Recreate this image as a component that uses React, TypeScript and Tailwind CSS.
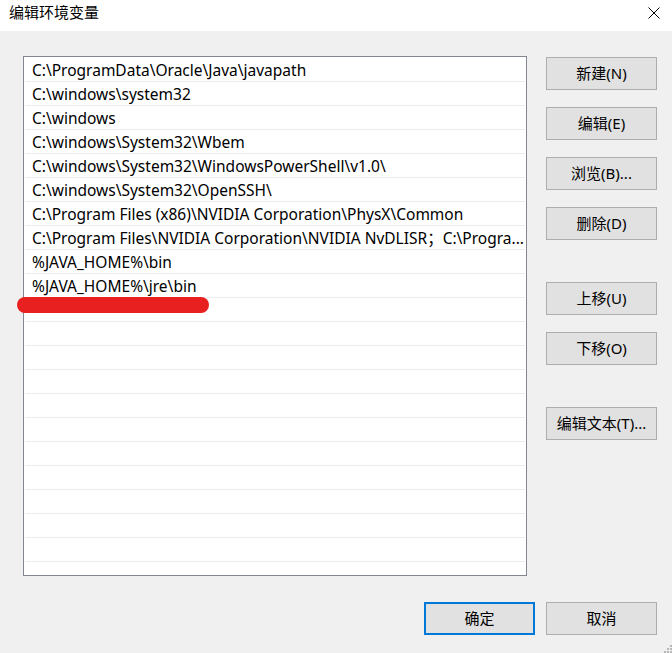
import React from "react";

const paths = [
  "C:\\ProgramData\\Oracle\\Java\\javapath",
  "C:\\windows\\system32",
  "C:\\windows",
  "C:\\windows\\System32\\Wbem",
  "C:\\windows\\System32\\WindowsPowerShell\\v1.0\\",
  "C:\\windows\\System32\\OpenSSH\\",
  "C:\\Program Files (x86)\\NVIDIA Corporation\\PhysX\\Common",
  "C:\\Program Files\\NVIDIA Corporation\\NVIDIA NvDLISR；C:\\Progra...",
  "%JAVA_HOME%\\bin",
  "%JAVA_HOME%\\jre\\bin",
];

const rows = [...paths, ...Array(12).fill("")];

const font = { fontFamily: '"Noto Sans", "Noto Sans CJK SC", sans-serif' };

function Btn({ label, className = "", primary = false }: { label: string; className?: string; primary?: boolean }) {
  return (
    <button
      className={
        "w-[111px] h-[33px] bg-[#e1e1e1] text-[15px] text-black flex items-center justify-center " +
        (primary ? "border-2 border-[#0078d7] " : "border border-[#adadad] ") +
        className
      }
    >
      {label}
    </button>
  );
}

export default function App() {
  return (
    <div className="relative w-[672px] h-[653px] bg-[#f0f0f0] overflow-hidden" style={font}>
      {/* title bar */}
      <div className="h-[31px] bg-white flex items-center justify-between pl-[9px] pr-[12px]">
        <span className="text-[15px] text-black leading-none -mt-[7px]">编辑环境变量</span>
        <svg width="12" height="12" viewBox="0 0 12 12" className="-mt-[6px]">
          <path d="M0.5 0.5 L11.5 11.5 M11.5 0.5 L0.5 11.5" stroke="#000" strokeWidth="1" />
        </svg>
      </div>

      <div className="flex pl-[23px] pt-[25px] pr-[15px]">
        {/* list */}
        <div className="w-[504px] h-[520px] bg-white border border-[#828790] overflow-hidden pt-px px-px">
          {rows.map((p, i) => (
            <div
              key={i}
              className="h-[24px] border-b border-[#ececec] pl-[7px] text-[15.5px] text-black leading-[24px] whitespace-nowrap overflow-hidden"
            >
              {p}
            </div>
          ))}
        </div>

        {/* side buttons */}
        <div className="ml-[19px] flex flex-col pt-px">
          <Btn label="新建(N)" />
          <Btn label="编辑(E)" className="mt-[17px]" />
          <Btn label="浏览(B)..." className="mt-[17px]" />
          <Btn label="删除(D)" className="mt-[17px]" />
          <Btn label="上移(U)" className="mt-[42px]" />
          <Btn label="下移(O)" className="mt-[17px]" />
          <Btn label="编辑文本(T)..." className="mt-[42px]" />
        </div>
      </div>

      {/* bottom buttons */}
      <div className="flex justify-end gap-[11px] pr-[15px] mt-[26px]">
        <Btn label="确定" primary />
        <Btn label="取消" />
      </div>

      {/* red highlight mark */}
      <div className="absolute left-[17px] top-[297px] w-[192px] h-[16px] rounded-full bg-[#e8201f]" />

      {/* resize grip */}
      <svg width="10" height="10" viewBox="0 0 10 10" className="absolute right-0 bottom-0">
        <rect x="8" y="2" width="2" height="2" fill="#b8b8b8" />
        <rect x="5" y="5" width="2" height="2" fill="#b8b8b8" />
        <rect x="8" y="5" width="2" height="2" fill="#b8b8b8" />
        <rect x="2" y="8" width="2" height="2" fill="#b8b8b8" />
        <rect x="5" y="8" width="2" height="2" fill="#b8b8b8" />
        <rect x="8" y="8" width="2" height="2" fill="#b8b8b8" />
      </svg>
    </div>
  );
}
